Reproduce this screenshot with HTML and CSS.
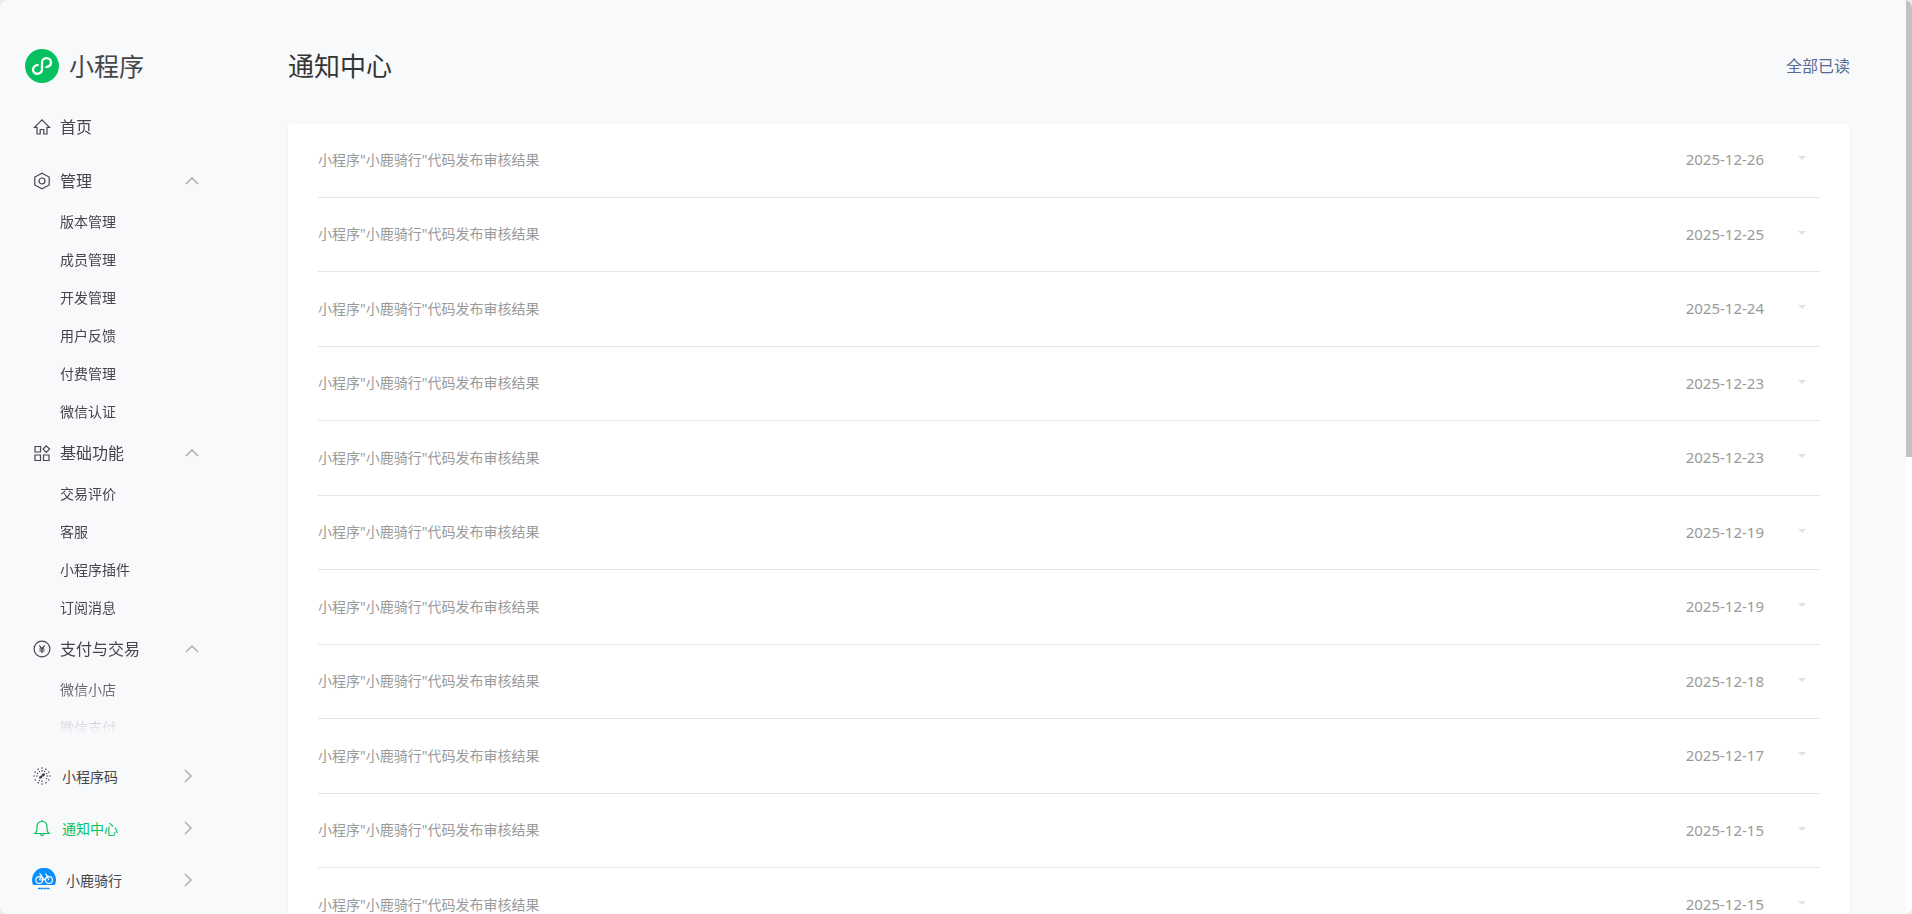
FILE: index.html
```
<!DOCTYPE html>
<html lang="zh-CN">
<head>
	<meta charset="utf-8">
	<title>小程序</title>
	<link rel="stylesheet" href="styles.css">
</head>
<body>
<div class="window">
	<aside class="side">
		<a class="logo" href="#">
			<svg width="34" height="34" viewBox="0 0 34 34" fill="none"><circle cx="17" cy="17" r="17" fill="#07c160"/><path d="M12.6 16C9.8 16.6 8 18.3 8 20.6C8 23 10 24.8 12.4 24.8C14.9 24.8 17 23 17 20.6V13.4C17 11 19.1 9.2 21.6 9.2C24 9.2 26 11 26 13.4C26 15.7 24.2 17.4 21.4 18" stroke="#fff" stroke-width="2.3" stroke-linecap="round"/></svg>
			<span>小程序</span>
		</a>
		<nav class="menu">
			<a class="head home" href="#">
				<svg width="18" height="18" viewBox="0 0 18 18" class="ico"><path d="M1.5 9.3L9 1.8L16.5 9.3H14V16H10.8V11.5H7.2V16H4V9.3Z"/></svg>
				首页
			</a>
			<button class="head">
				<svg width="18" height="18" viewBox="0 0 18 18" class="ico"><path d="M9 1.2L16.2 5V13L9 16.8L1.8 13V5Z"/><circle cx="9" cy="9" r="3"/></svg>
				管理
				<svg width="14" height="8" viewBox="0 0 14 8" class="up"><path d="M1 7L7 1L13 7"/></svg>
			</button>
			<ul>
				<li><a href="#">版本管理</a></li>
				<li><a href="#">成员管理</a></li>
				<li><a href="#">开发管理</a></li>
				<li><a href="#">用户反馈</a></li>
				<li><a href="#">付费管理</a></li>
				<li><a href="#">微信认证</a></li>
			</ul>
			<button class="head">
				<svg width="18" height="18" viewBox="0 0 18 18" class="ico"><path d="M2 2.5H7.5V8H2ZM2 11H7.5V16.5H2ZM10.5 11H16V16.5H10.5ZM13.3 1.8L16.6 5.1L13.3 8.4L10 5.1Z"/></svg>
				基础功能
				<svg width="14" height="8" viewBox="0 0 14 8" class="up"><path d="M1 7L7 1L13 7"/></svg>
			</button>
			<ul>
				<li><a href="#">交易评价</a></li>
				<li><a href="#">客服</a></li>
				<li><a href="#">小程序插件</a></li>
				<li><a href="#">订阅消息</a></li>
			</ul>
			<button class="head">
				<svg width="18" height="18" viewBox="0 0 18 18" class="ico"><circle cx="9" cy="9" r="7.9"/><path d="M6.3 5.5L9 8.7L11.7 5.5M9 8.7V13M6.3 9H11.7M6.3 11H11.7"/></svg>
				支付与交易
				<svg width="14" height="8" viewBox="0 0 14 8" class="up"><path d="M1 7L7 1L13 7"/></svg>
			</button>
			<ul>
				<li><a href="#">微信小店</a></li>
				<li><a href="#">微信支付</a></li>
			</ul>
		</nav>
		<div class="foot">
			<a href="#">
				<svg width="18" height="18" viewBox="0 0 18 18" class="ico"><path d="M9 .3V1.8M9 3V4.5M9 13.5V15M9 16.2V17.7M.3 9H1.8M3 9H4.5M13.5 9H15M16.2 9H17.7M4.8 1.6L5.5 2.9M6.2 4L6.7 5M13.2 1.6L12.5 2.9M11.8 4L11.3 5M1.6 4.8L2.9 5.5M4 6.2L5 6.7M16.4 4.8L15.1 5.5M14 6.2L13 6.7M1.6 13.2L2.9 12.5M16.4 13.2L15.1 12.5M14 11.8L13 11.3M4.8 16.4L5.5 15.1M6.2 14L6.7 13M13.2 16.4L12.5 15.1"/><path d="M7.6 11.4C6 10.9 6.9 9.4 8.2 9.4M8 11.3L10 6.8M10.4 6.8C12 7.2 11.1 8.7 9.8 8.7" stroke-width="1.4"/></svg>
				小程序码
				<svg width="8" height="14" viewBox="0 0 8 14" class="right"><path d="M1 1L7 7L1 13"/></svg>
			</a>
			<a href="#" class="on">
				<svg width="18" height="18" viewBox="0 0 18 18" class="ico"><path d="M2 14.5C3.5 13.3 4 12 4 9.8V7.8C4 4.6 6 2.5 9 2.5S14 4.6 14 7.8V9.8C14 12 14.5 13.3 16 14.5ZM9 1V2.5M7.3 14.7C7.5 17.2 10.5 17.2 10.7 14.7"/></svg>
				通知中心
				<svg width="8" height="14" viewBox="0 0 8 14" class="right"><path d="M1 1L7 7L1 13"/></svg>
			</a>
			<a href="#" class="user">
				<svg width="24" height="24" viewBox="0 0 24 24" fill="none"><circle cx="12" cy="12" r="12" fill="#fff"/><path d="M1.2 17A12 12 0 1 1 22.8 17Z" fill="#0a8fff"/><g stroke="#fff" stroke-width="1.1"><circle cx="7.3" cy="12" r="3.4"/><circle cx="17" cy="12" r="3.4"/><path d="M7.3 12L9.5 7.5L12 12L16 7.5M9.5 7.5L7.5 5.5M12 12H7.3M17 12L13.5 5.5"/></g><path d="M6 20.5H18" stroke="#0a8fff" stroke-width="1.6" stroke-dasharray="2.5 .3"/></svg>
				小鹿骑行
				<svg width="8" height="14" viewBox="0 0 8 14" class="right"><path d="M1 1L7 7L1 13"/></svg>
			</a>
		</div>
	</aside>
	<main class="main">
		<header>
			<h1>通知中心</h1>
			<a href="#">全部已读</a>
		</header>
		<ul class="list">
			<li><span>小程序"小鹿骑行"代码发布审核结果</span><time>2025-12-26</time><i class="arrow"></i></li>
			<li><span>小程序"小鹿骑行"代码发布审核结果</span><time>2025-12-25</time><i class="arrow"></i></li>
			<li><span>小程序"小鹿骑行"代码发布审核结果</span><time>2025-12-24</time><i class="arrow"></i></li>
			<li><span>小程序"小鹿骑行"代码发布审核结果</span><time>2025-12-23</time><i class="arrow"></i></li>
			<li><span>小程序"小鹿骑行"代码发布审核结果</span><time>2025-12-23</time><i class="arrow"></i></li>
			<li><span>小程序"小鹿骑行"代码发布审核结果</span><time>2025-12-19</time><i class="arrow"></i></li>
			<li><span>小程序"小鹿骑行"代码发布审核结果</span><time>2025-12-19</time><i class="arrow"></i></li>
			<li><span>小程序"小鹿骑行"代码发布审核结果</span><time>2025-12-18</time><i class="arrow"></i></li>
			<li><span>小程序"小鹿骑行"代码发布审核结果</span><time>2025-12-17</time><i class="arrow"></i></li>
			<li><span>小程序"小鹿骑行"代码发布审核结果</span><time>2025-12-15</time><i class="arrow"></i></li>
			<li><span>小程序"小鹿骑行"代码发布审核结果</span><time>2025-12-15</time><i class="arrow"></i></li>
		</ul>
	</main>
	<div class="scroll"><div class="thumb"></div></div>
</div>
</body>
</html>
```
FILE: styles.css
```
* {
	box-sizing: border-box;
}
body {
	margin: 0;
	background: #e9eaec;
	color: #45464a;
	font-family: "Noto Sans", "Noto Sans CJK SC", sans-serif;
	font-size: 14px;
	line-height: 1.5;
}
ul {
	list-style: none;
	margin: 0;
	padding: 0;
}
a {
	color: inherit;
	text-decoration: none;
}
.window {
	display: flex;
	height: 100vh;
	overflow: hidden;
	border-radius: 8px;
	background: #f8f9fb;
}

/* sidebar */
.side {
	display: flex;
	flex-direction: column;
	flex: none;
	width: 232px;
	padding-bottom: 8px;
}
.logo {
	display: flex;
	align-items: center;
	gap: 10px;
	height: 34px;
	margin: 49px 0 22px 25px;
	font-size: 25px;
	line-height: 32px;
}
.menu {
	flex: 1;
	min-height: 0;
	overflow: hidden;
	-webkit-mask-image: linear-gradient(to top, transparent, #000 56px);
	mask-image: linear-gradient(to top, transparent, #000 56px);
}
.head {
	display: flex;
	align-items: center;
	gap: 9px;
	width: 100%;
	height: 44px;
	padding: 0 33px;
	border: 0;
	background: none;
	color: inherit;
	font: inherit;
	font-size: 16px;
	cursor: pointer;
}
.home {
	margin-bottom: 10px;
}
.menu li a {
	display: block;
	padding-left: 60px;
	line-height: 38px;
}
.ico {
	flex: none;
	fill: none;
	stroke: currentColor;
	stroke-width: 1.2;
}
.up,
.right {
	flex: none;
	margin-left: auto;
	fill: none;
	stroke: #b2b3b5;
	stroke-width: 1.6;
}
.foot {
	margin-top: 16px;
}
.foot a {
	display: flex;
	align-items: center;
	gap: 11px;
	height: 52px;
	padding: 0 40px 0 33px;
}
.foot .on {
	color: #07c160;
}
.foot .user {
	gap: 10px;
	padding-left: 32px;
}

/* notices */
.main {
	flex: 1;
	padding: 0 56px;
}
header {
	display: flex;
	align-items: center;
	justify-content: space-between;
	height: 124px;
	padding-top: 8px;
}
h1 {
	margin: 0;
	color: #353535;
	font-size: 26px;
	font-weight: 400;
}
header a {
	color: #576b95;
	font-size: 16px;
}
.list {
	padding: 0 30px;
	border-radius: 4px;
	background: #fff;
	box-shadow: 0 1px 2px rgba(0, 0, 0, 0.1);
}
.list li {
	display: flex;
	align-items: center;
	padding: 25px 14px 26px 0;
	border-bottom: 1px solid #e4e5e7;
	color: #9a9a9a;
}
.list li:first-child {
	padding-top: 24px;
}
time {
	margin-left: auto;
	font-size: 15px;
}
.arrow {
	margin: 0 0 2px 34px;
	border: 4px solid transparent;
	border-top-color: #e1e2e6;
	border-bottom: 0;
}

.scroll {
	flex: none;
	width: 6px;
	background: #fff;
}
.thumb {
	height: 50%;
	background: #c1c1c1;
}
```
